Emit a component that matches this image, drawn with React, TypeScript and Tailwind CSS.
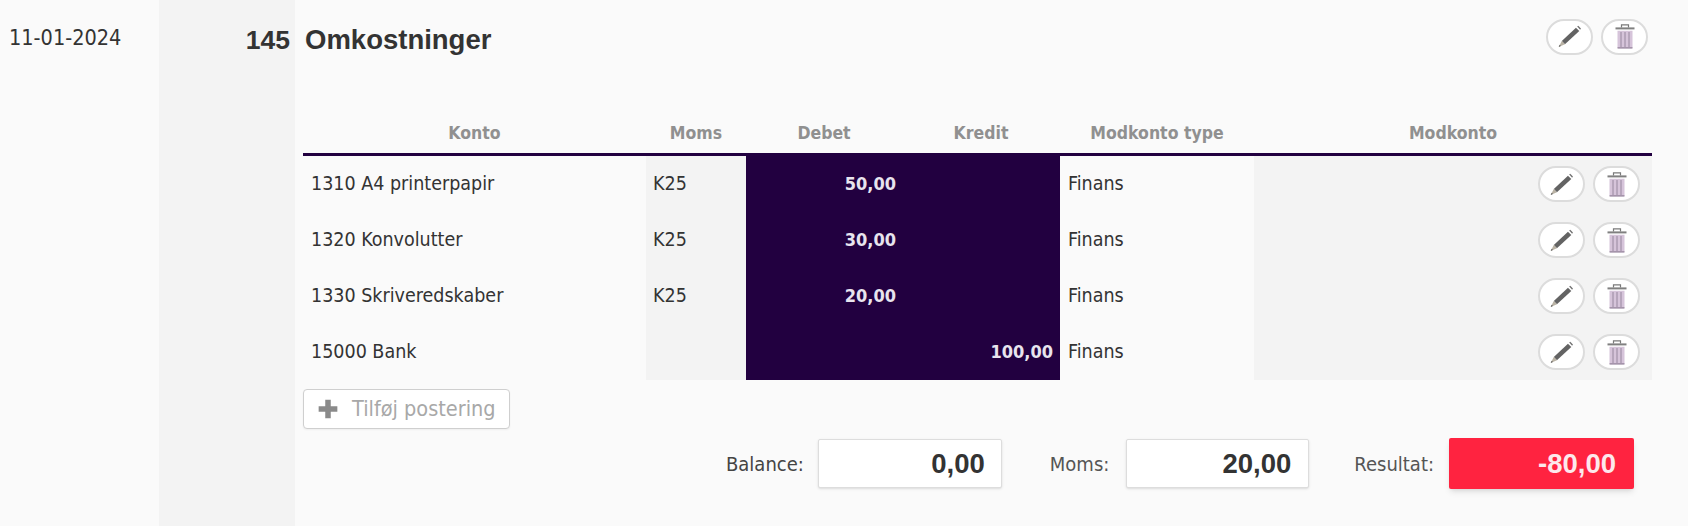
const rows = [
  { konto: "1310 A4 printerpapir", moms: "K25", debet: "50,00", kredit: "" },
  { konto: "1320 Konvolutter", moms: "K25", debet: "30,00", kredit: "" },
  { konto: "1330 Skriveredskaber", moms: "K25", debet: "20,00", kredit: "" },
  { konto: "15000 Bank", moms: "", debet: "", kredit: "100,00" },
];

const headers = ["Konto", "Moms", "Debet", "Kredit", "Modkonto type", "Modkonto"];

function PencilIcon() {
  return (
    <svg width="25" height="23" viewBox="0 0 24 22">
      <path d="M18.2 2.6 21.4 5.8 7.6 18.4 4.6 15.4Z" fill="#636363" />
      <path d="M19.4 1.4 20.4 0.6 23 3.2 22.2 4.6Z" fill="#707070" />
      <path d="M4.6 15.4 7.6 18.4 1.6 21Z" fill="#b9b2a4" />
      <path d="M2.6 18.8 3.8 20 1.6 21Z" fill="#5c5c5c" />
    </svg>
  );
}

function TrashIcon() {
  return (
    <svg width="20" height="25" viewBox="0 0 20 25">
      <path d="M6.5 3.5V0.8h7v2.7" fill="none" stroke="#7a7a7a" strokeWidth="1.2" />
      <rect x="0.5" y="3.4" width="19" height="2" fill="#808080" />
      <path d="M2.5 6.8h15V23.4a1 1 0 0 1-1 1H3.5a1 1 0 0 1-1-1Z" fill="#d6c4da" />
      <path d="M6 8v15M10 8v15M14 8v15" stroke="#9d8da5" strokeWidth="1.1" />
      <path d="M2.5 23.9h15" stroke="#85768c" strokeWidth="1" />
    </svg>
  );
}

function ActionButtons({ className }: { className: string }) {
  return (
    <div className={`flex gap-2 ${className}`}>
      <button className="flex h-[36px] w-[47px] items-center justify-center rounded-full border-2 border-[#dcdcdc] bg-white">
        <PencilIcon />
      </button>
      <button className="flex h-[36px] w-[47px] items-center justify-center rounded-full border-2 border-[#dcdcdc] bg-white">
        <TrashIcon />
      </button>
    </div>
  );
}

export default function App() {
  return (
    <div className="flex h-[526px] w-[1688px] overflow-hidden bg-[#fafafa] font-['DejaVu_Sans',sans-serif] text-[#333] [font-stretch:condensed]">
      {/* Date */}
      <div className="w-[159px] pt-[22px] pl-[9px] text-[21.5px]">11-01-2024</div>

      {/* Number */}
      <div className="w-[136px] bg-[#f3f3f3] pt-[23px] pr-[5px] text-right font-['Liberation_Sans',sans-serif] text-[26.5px] leading-[34px] font-bold text-[#333]">
        145
      </div>

      {/* Posting */}
      <div className="flex-1 pt-[18px] pr-[36px] pl-[8px]">
        <div className="flex h-[37px] items-center justify-between">
          <h2 className="mt-[7px] ml-[2px] font-['Liberation_Sans',sans-serif] text-[27.5px] font-bold text-[#333]">Omkostninger</h2>
          <ActionButtons className="mr-[4px]" />
        </div>

        {/* Table */}
        <div className="mt-[55px] grid h-[46px] grid-cols-[343px_100px_156px_158px_194px_398px] items-center border-b-3 border-[#220040] pt-[3px] text-center text-[17.5px] font-bold text-[#909090]">
          {headers.map((h) => (
            <span key={h}>{h}</span>
          ))}
        </div>
        {rows.map((row) => (
          <div key={row.konto} className="grid h-[56px] grid-cols-[343px_100px_156px_158px_194px_398px] items-stretch text-[19.5px]">
            <div className="flex items-center pb-[1px] pl-[8px]">{row.konto}</div>
            <div className="flex items-center bg-[#f3f3f3] pb-[1px] pl-[7px]">{row.moms}</div>
            <div className="flex items-center justify-end bg-[#220040] pr-[6px] pb-[1px] text-[18px] font-bold text-[#e8e4ee]">{row.debet}</div>
            <div className="flex items-center justify-end bg-[#220040] pr-[7px] pb-[1px] text-[18px] font-bold text-[#e8e4ee]">{row.kredit}</div>
            <div className="flex items-center pb-[1px] pl-[8px]">Finans</div>
            <div className="flex items-center justify-end bg-[#f3f3f3] pr-[12px]">
              <ActionButtons className="" />
            </div>
          </div>
        ))}

        <button className="mt-[9px] flex h-[40px] w-[207px] items-center gap-[13px] rounded-[4px] border border-[#cfcfcf] bg-white pl-[13px] text-[21.5px] text-[#a8a8a8] shadow-xs">
          <svg width="22" height="22" viewBox="0 0 20 20">
            <path d="M7.5 1.5h5v6h6v5h-6v6h-5v-6h-6v-5h6Z" fill="#8a8a8a" />
          </svg>
          Tilføj postering
        </button>

        {/* Totals */}
        <div className="mt-[9px] flex h-[51px] items-center justify-end pr-[18px]">
          <span className="mr-[14px] text-[20px] text-[#444]">Balance:</span>
          <div className="flex h-[49px] w-[184px] items-center justify-end rounded-[2px] border border-[#ddd] bg-white pr-[16px] font-['Liberation_Sans',sans-serif] text-[27.5px] font-bold text-[#333] shadow-sm">
            0,00
          </div>
          <span className="mr-[17px] ml-[48px] text-[20px] text-[#555]">Moms:</span>
          <div className="flex h-[49px] w-[183px] items-center justify-end rounded-[2px] border border-[#ddd] bg-white pr-[17px] font-['Liberation_Sans',sans-serif] text-[27.5px] font-bold text-[#333] shadow-sm">
            20,00
          </div>
          <span className="mr-[15px] ml-[45px] text-[20px] text-[#555]">Resultat:</span>
          <div className="flex h-[51px] w-[185px] items-center justify-end rounded-[2px] bg-[#ff2340] pr-[18px] font-['Liberation_Sans',sans-serif] text-[27.5px] font-bold text-[#fde8ec] shadow-md">
            -80,00
          </div>
        </div>
      </div>
    </div>
  );
}
